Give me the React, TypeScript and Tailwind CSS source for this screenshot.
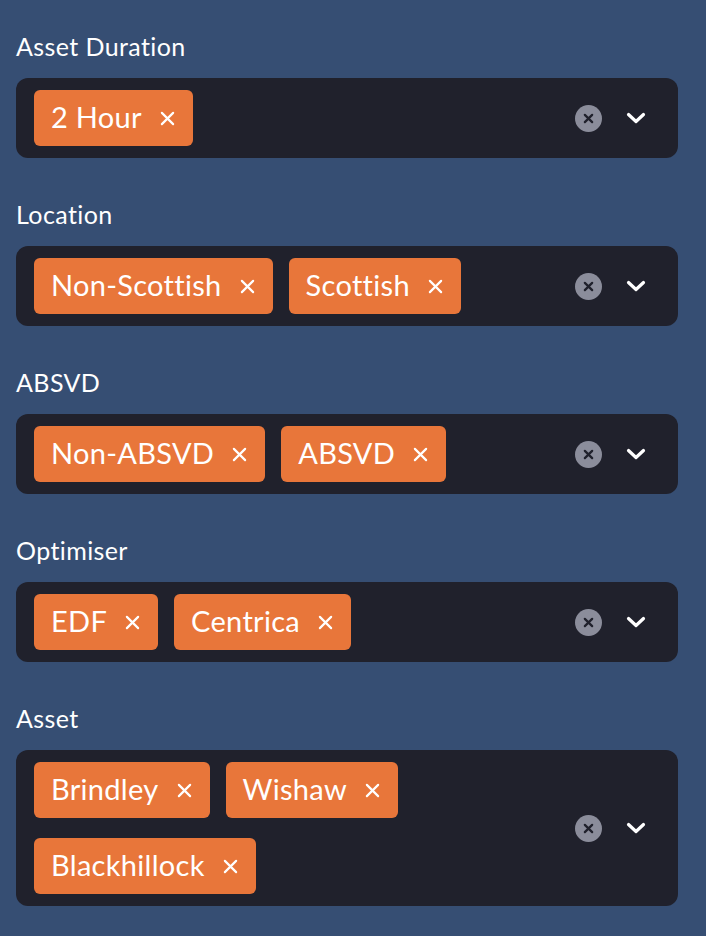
import React from "react";

const sections: { label: string; tags: string[] }[] = [
  { label: "Asset Duration", tags: ["2 Hour"] },
  { label: "Location", tags: ["Non-Scottish", "Scottish"] },
  { label: "ABSVD", tags: ["Non-ABSVD", "ABSVD"] },
  { label: "Optimiser", tags: ["EDF", "Centrica"] },
  { label: "Asset", tags: ["Brindley", "Wishaw", "Blackhillock"] },
];

function XIcon({ className }: { className?: string }) {
  return (
    <svg viewBox="0 0 16 16" className={className} fill="none" stroke="currentColor" strokeWidth="2.3" strokeLinecap="round">
      <path d="M2 2l12 12M14 2L2 14" />
    </svg>
  );
}

function Tag({ text }: { text: string }) {
  return (
    <div className="flex h-[56px] items-center rounded-[6px] bg-[#e8763a] pl-[17px] pr-[18px] text-white">
      <span className="pb-[3px] text-[29px] leading-none tracking-[0.3px]">{text}</span>
      <XIcon className="ml-[18px] h-[15px] w-[15px]" />
    </div>
  );
}

function MultiSelect({ tags }: { tags: string[] }) {
  return (
    <div className="flex min-h-[80px] items-center rounded-[12px] bg-[#20212c] pl-[18px] pr-[32px]">
      <div className="flex flex-1 flex-wrap gap-x-[16px] gap-y-[20px] py-[12px] pr-[12px]">
        {tags.map((t) => (
          <Tag key={t} text={t} />
        ))}
      </div>
      <div className="ml-auto flex items-center gap-[24px]">
        <div className="flex h-[27px] w-[27px] items-center justify-center rounded-full bg-[#8b8d9b] text-[#20212c]">
          <svg viewBox="0 0 16 16" className="h-[13px] w-[13px]" fill="none" stroke="currentColor" strokeWidth="2.8" strokeLinecap="round">
            <path d="M3.5 3.5l9 9M12.5 3.5l-9 9" />
          </svg>
        </div>
        <svg viewBox="0 0 20 12" className="h-[12px] w-[20px] text-white" fill="none" stroke="currentColor" strokeWidth="3.2" strokeLinecap="round" strokeLinejoin="round">
          <path d="M2.5 2.5L10 9.5l7.5-7" />
        </svg>
      </div>
    </div>
  );
}

export default function App() {
  return (
    <div
      className="min-h-[936px] w-full bg-[#364e73] px-[16px] pt-[30px]"
      style={{ fontFamily: "Lato, 'Noto Sans', sans-serif" }}
    >
      <div className="flex flex-col gap-[40px]">
        {sections.map((s) => (
          <div key={s.label} className="w-[662px]">
            <div className="mb-[15px] h-[33px] text-[25px] leading-[33px] tracking-[0.4px] text-white">{s.label}</div>
            <MultiSelect tags={s.tags} />
          </div>
        ))}
      </div>
    </div>
  );
}
